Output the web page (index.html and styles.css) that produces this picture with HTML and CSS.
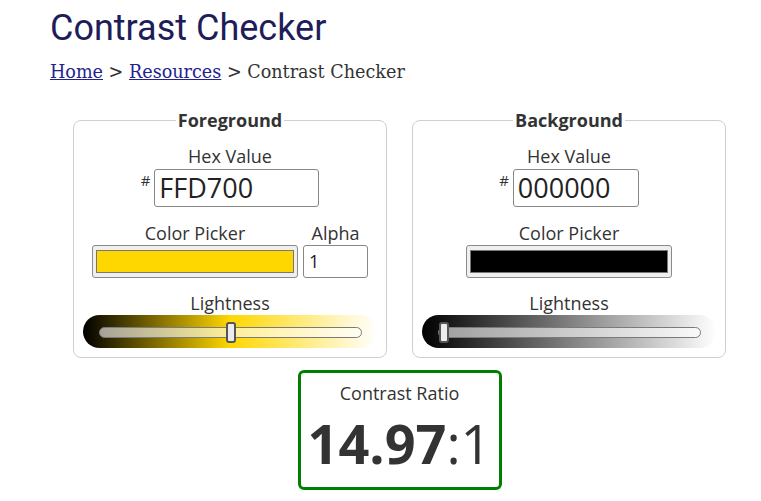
FILE: index.html
```html
<!DOCTYPE html>
<html lang="en">
<head>
<meta charset="utf-8">
<title>Contrast Checker</title>
<link rel="stylesheet" href="styles.css">
</head>
<body>
<div class="page">
  <h1 class="title">Contrast Checker</h1>
  <nav class="crumbs"><a href="#">Home</a> &gt; <a href="#">Resources</a> &gt; Contrast Checker</nav>
  <main class="main">
    <div class="panels">
      <fieldset class="panel">
        <legend class="legend">Foreground</legend>
        <div class="label">Hex Value</div>
        <div class="hex-row">
          <span class="hash">#</span>
          <div class="hex-input hex-fg">FFD700</div>
        </div>
        <div class="picker-row">
          <div class="col">
            <div class="label">Color Picker</div>
            <div class="picker"><div class="swatch swatch-gold"></div></div>
          </div>
          <div class="col">
            <div class="label">Alpha</div>
            <div class="alpha-input">1</div>
          </div>
        </div>
        <div class="label label-light">Lightness</div>
        <div class="slider slider-gold">
          <div class="track"><div class="thumb" style="left: calc(50% - 5px)"></div></div>
        </div>
      </fieldset>
      <fieldset class="panel">
        <legend class="legend">Background</legend>
        <div class="label">Hex Value</div>
        <div class="hex-row">
          <span class="hash">#</span>
          <div class="hex-input hex-bg">000000</div>
        </div>
        <div class="picker-row">
          <div class="col">
            <div class="label">Color Picker</div>
            <div class="picker"><div class="swatch swatch-black"></div></div>
          </div>
        </div>
        <div class="label label-light">Lightness</div>
        <div class="slider slider-gray">
          <div class="track"><div class="thumb" style="left: 0px"></div></div>
        </div>
      </fieldset>
    </div>
    <div class="ratio">
      <div class="ratio-label">Contrast Ratio</div>
      <div class="ratio-value"><b>14.97</b>:1</div>
    </div>
  </main>
</div>
</body>
</html>
```

FILE: styles.css
```css
html, body {
  margin: 0;
  padding: 0;
  background: #fff;
}

.page {
  padding: 7px 0 0 50px;
  font-family: "Open Sans", sans-serif;
  color: #333;
}

.title {
  margin: 0;
  font-family: Roboto, sans-serif;
  font-weight: 400;
  font-size: 36px;
  line-height: 43px;
  color: #1e1d5a;
}

.crumbs {
  margin-top: 10px;
  font-family: "DejaVu Serif", serif;
  font-size: 17.6px;
  line-height: 24px;
  color: #333;
}

.crumbs a {
  color: #23238e;
  text-decoration: underline;
}

.main {
  width: 699px;
  margin-top: 24px;
}

.panels {
  display: flex;
  justify-content: center;
  gap: 25px;
}

.panel {
  box-sizing: border-box;
  width: 314px;
  margin: 0;
  padding: 12px 0 9px;
  border: 1px solid #cfcfcf;
  border-radius: 8px;
  display: flex;
  flex-direction: column;
  align-items: center;
}

.legend {
  margin: 0 auto;
  padding: 0 2px;
  font-weight: 700;
  font-size: 18px;
  line-height: 24px;
  color: #333;
}

.label {
  font-size: 18px;
  line-height: 24px;
  text-align: center;
  color: #333;
}

.hex-row {
  display: flex;
  align-items: flex-start;
  margin-top: 1px;
}

.hash {
  font-size: 15px;
  line-height: 15px;
  margin-top: 4px;
  margin-right: 4px;
  color: #333;
}

.hex-input {
  box-sizing: border-box;
  height: 38px;
  padding: 0 4px;
  border: 1px solid #888;
  border-radius: 3px;
  font-size: 27px;
  line-height: 36px;
  color: #222;
}

.hex-fg { width: 165px; }
.hex-bg { width: 126px; }

.picker-row {
  display: flex;
  gap: 5px;
  margin-top: 14px;
}

.col {
  display: flex;
  flex-direction: column;
  align-items: center;
}

.picker {
  box-sizing: border-box;
  width: 206px;
  height: 33px;
  padding: 4px 3px;
  background: #efefef;
  border: 1px solid #8a8a8a;
  border-radius: 3px;
}

.swatch {
  height: 100%;
  box-sizing: border-box;
  border: 1px solid #777;
}

.swatch-gold { background: #ffd700; }
.swatch-black { background: #000; }

.alpha-input {
  box-sizing: border-box;
  width: 65px;
  height: 33px;
  padding: 0 5px;
  border: 1px solid #888;
  border-radius: 3px;
  font-size: 18px;
  line-height: 31px;
  color: #222;
}

.label-light {
  margin-top: 13px;
}

.slider {
  box-sizing: border-box;
  width: 294px;
  height: 33px;
  padding: 12px 15px 0 16px;
  border-radius: 17px;
}

.slider-gold {
  background: linear-gradient(to right, #000 0%, #ffd700 50%, #fff 100%);
}

.slider-gray {
  background: linear-gradient(to right, #000 0%, #fff 100%);
}

.track {
  position: relative;
  box-sizing: border-box;
  height: 11px;
  border: 1px solid #7a7a7a;
  border-radius: 6px;
  background: rgba(255, 255, 255, 0.6);
}

.thumb {
  position: absolute;
  top: -6px;
  box-sizing: border-box;
  width: 10px;
  height: 21px;
  background: #ececec;
  border: 2px solid #555;
  border-radius: 3px;
}

.ratio {
  box-sizing: border-box;
  width: 204px;
  height: 120px;
  margin: 12px auto 0;
  border: 3px solid #008000;
  border-radius: 6px;
  text-align: center;
  padding-top: 8px;
}

.ratio-label {
  font-size: 18px;
  line-height: 24px;
  color: #333;
}

.ratio-value {
  margin-top: 1px;
  font-size: 54px;
  line-height: 74px;
  color: #333;
  font-weight: 400;
}

.ratio-value b {
  font-weight: 700;
}
```
